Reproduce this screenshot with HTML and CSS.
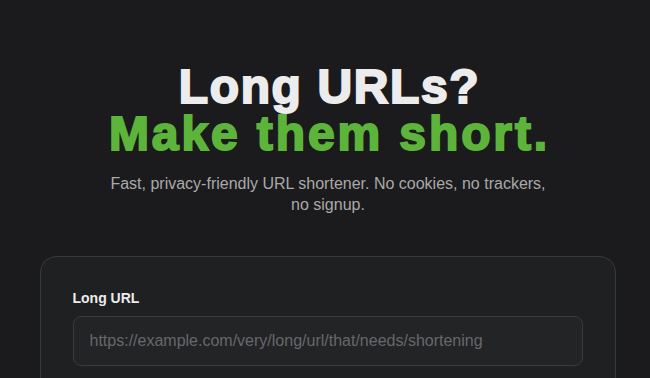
FILE: index.html
```html
<!DOCTYPE html>
<html lang="en">
<head>
<meta charset="utf-8">
<title>Shortener</title>
<link rel="stylesheet" href="styles.css">
</head>
<body>
<main class="page">
  <header class="hero">
    <h1 class="title"><span class="line1">Long URLs?</span><span class="line2">Make them short.</span></h1>
    <p class="subtitle">Fast, privacy-friendly URL shortener. No cookies, no trackers, no signup.</p>
  </header>
  <section class="card">
    <label class="label" for="url">Long URL</label>
    <input class="input" id="url" type="text" placeholder="https://example.com/very/long/url/that/needs/shortening">
  </section>
</main>
</body>
</html>
```

FILE: styles.css
```css
* { box-sizing: border-box; }
html, body { margin: 0; padding: 0; background: #1b1b1d; }
body { font-family: "Liberation Sans", Arial, sans-serif; color: #e8e8e8; overflow: hidden; height: 378px; }
.page { display: flex; flex-direction: column; align-items: center; padding-top: 63px; }
.hero { display: flex; flex-direction: column; align-items: center; text-align: center; }
.title { margin: 0; padding-left: 9px; font-size: 48px; font-weight: 900; line-height: 47px; display: flex; flex-direction: column; align-items: center; -webkit-text-stroke: 2px currentColor; }
.line1 { color: #ececec; letter-spacing: 1.6px; }
.line2 { color: #5db43a; letter-spacing: 2.9px; }
.subtitle { margin: 16px 0 0; width: 445px; padding-left: 6px; font-size: 16px; line-height: 21px; color: #a9a9a9; }
.card { margin-top: 41px; width: 576px; margin-left: 5px; background: #1f2022; border: 1px solid #38393b; border-radius: 16px; padding: 33px 32px 40px; display: flex; flex-direction: column; }
.label { font-size: 14px; font-weight: bold; color: #ececec; margin-bottom: 10px; }
.input { height: 50px; width: 100%; background: #232426; border: 1px solid #3a3b3d; border-radius: 8px; padding: 0 16px; font-family: "Liberation Sans", Arial, sans-serif; font-size: 16px; color: #ddd; outline: none; }
.input::placeholder { color: #67686a; }
```
